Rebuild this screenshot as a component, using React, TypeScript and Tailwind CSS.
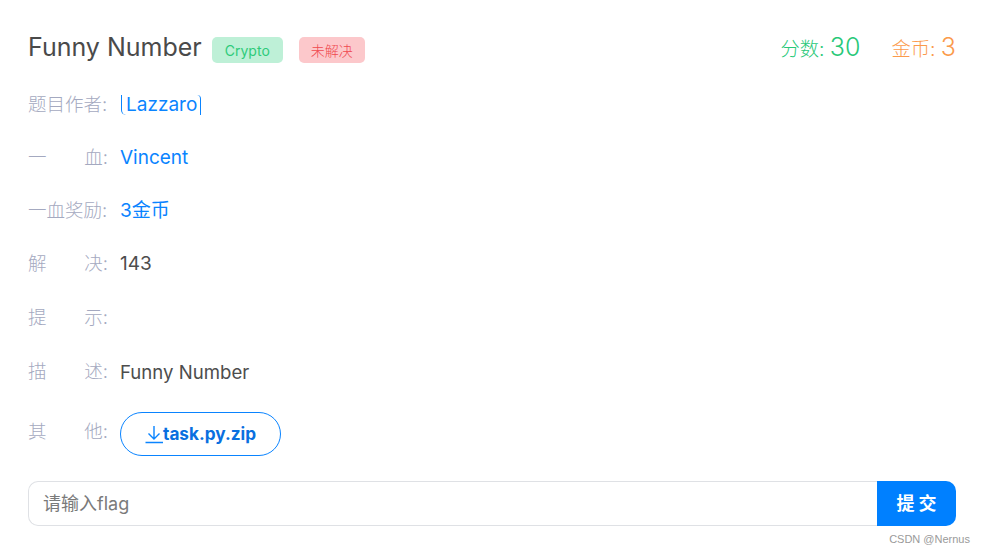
const F = "font-['Inter','Noto_Sans_CJK_SC',sans-serif]";

function Row({ a, b, children, className = "mb-[25px]" }: { a: string; b?: string; children?: React.ReactNode; className?: string }) {
  return (
    <div className={`flex items-center h-[28px] ${className}`}>
      <div className="w-[80px] -mt-[2px] flex shrink-0 justify-between text-[18.5px] leading-[28px] font-light text-[#a4a9c0]">
        {b ? (<><span>{a}</span><span>{b}:</span></>) : <span className="whitespace-nowrap">{a}:</span>}
      </div>
      <div className="ml-[12px] text-[19px] leading-[28px]">{children}</div>
    </div>
  );
}

export default function App() {
  return (
    <div className={`${F} relative w-[985px] h-[553px] bg-white overflow-hidden pl-[28px] pr-[29px] pt-[29px] text-[#4d4d4d]`}>
      <div className="flex items-center justify-between h-[36px] mb-[26px]">
        <div className="flex items-center">
          <span className="text-[25px] leading-[36px] font-[420] text-[#4a4a4a]">Funny Number</span>
          <span className="ml-[10px] mt-[6px] w-[71px] h-[26px] rounded-[5px] bg-[#bef0d7] text-[#2ecb7a] text-[14px] font-[420] flex items-center justify-center">Crypto</span>
          <span className="ml-[16px] mt-[6px] w-[66px] h-[26px] rounded-[5px] bg-[#fcc8cb] text-[#f0494f] text-[14px] font-light flex items-center justify-center">未解决</span>
        </div>
        <div className="flex items-baseline font-light mt-[2px]">
          <span className="text-[19.3px] text-[#28c878]">分数: <span className="text-[25px] font-[350]">30</span></span>
          <span className="ml-[31px] text-[19.3px] text-[#fb9a4b]">金币: <span className="text-[25px] font-[350]">3</span></span>
        </div>
      </div>
      <Row a="题目作者">
        <div className="flex items-center text-[#0a84ff]">
          <span className="block w-[5px] h-[20px] ml-[1px] border-l-[1.5px] border-[#0a84ff] rounded-bl-[5px]" />
          <span>Lazzaro</span>
          <span className="block w-[4px] h-[20px] border-r-[1.5px] border-[#0a84ff] rounded-tr-[5px]" />
        </div>
      </Row>
      <Row a="一" b="血"><span className="text-[#0a84ff]">Vincent</span></Row>
      <Row a="一血奖励"><span className="text-[#0a84ff]">3金币</span></Row>
      <Row a="解" b="决" className="mb-[26px]"><span>143</span></Row>
      <Row a="提" b="示" className="mb-[26px]" />
      <Row a="描" b="述" className="mb-[26px]"><span className="text-[18.6px]">Funny Number</span></Row>
      <div className="flex items-center h-[44px] mb-[25px]">
        <div className="w-[80px] flex shrink-0 justify-between text-[18.5px] font-light text-[#a4a9c0] -mt-[4px]"><span>其</span><span>他:</span></div>
        <div className="ml-[12px] w-[161px] h-[44px] rounded-full border border-[#0a84ff] flex items-center justify-center text-[#0a6fe0] text-[17.2px] font-bold">
          <svg width="18" height="20" viewBox="0 0 18 20" fill="none" stroke="#0a84ff" strokeWidth="1.4">
            <path d="M9 2V15M3.5 9.5L9 15L14.5 9.5M0.5 18.5H18" />
          </svg>
          <span>task.py.zip</span>
        </div>
      </div>
      <div className="flex h-[45px] w-[928px]">
        <div className="flex-1 h-full rounded-l-[10px] border border-r-0 border-[#dfe1e5] pl-[14px] flex items-center text-[18px] font-normal text-[#7a7a7a]">请输入flag</div>
        <div className="w-[79px] h-full rounded-r-[10px] bg-[#0080ff] text-white text-[18px] font-bold flex items-center justify-center tracking-[4px] pl-[4px]">提交</div>
      </div>
      <div className="absolute right-[15px] top-[532px] text-[11px] leading-[14px] text-[#9a9a9a] font-['Liberation_Sans',sans-serif]">CSDN @Nernus</div>
    </div>
  );
}
